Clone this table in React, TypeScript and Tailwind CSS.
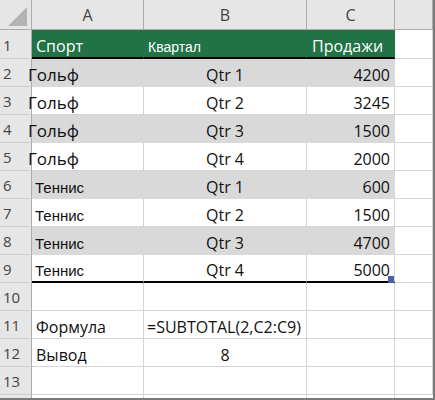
import React from 'react';

type Cell = {
  text: string;
  align?: 'left' | 'center' | 'right';
  font?: 'seg' | 'arial';
  size?: string;
  shift?: string;
};

type Row = {
  num: number;
  cells: (Cell | null)[];
  band?: boolean;
  header?: boolean;
  thick?: boolean;
};

const golf = (q: string, n: string, band: boolean, num: number): Row => ({
  num,
  band,
  cells: [
    { text: 'Гольф', shift: '-ml-[8px]', size: 'text-[17px]' },
    { text: q, align: 'center' },
    { text: n, align: 'right' },
    null,
  ],
});

const tennis = (q: string, n: string, band: boolean, num: number, thick = false): Row => ({
  num,
  band,
  thick,
  cells: [
    { text: 'Теннис', font: 'arial', size: 'text-[15px]', shift: '-ml-[1px]' },
    { text: q, align: 'center' },
    { text: n, align: 'right' },
    null,
  ],
});

const rows: Row[] = [
  {
    num: 1,
    header: true,
    cells: [
      { text: 'Спорт', size: 'text-[16px]' },
      { text: 'Квартал', font: 'arial', size: 'text-[14px]' },
      { text: 'Продажи', size: 'text-[16px]', shift: 'ml-[1px]' },
      null,
    ],
  },
  golf('Qtr 1', '4200', true, 2),
  golf('Qtr 2', '3245', false, 3),
  golf('Qtr 3', '1500', true, 4),
  golf('Qtr 4', '2000', false, 5),
  tennis('Qtr 1', '600', true, 6),
  tennis('Qtr 2', '1500', false, 7),
  tennis('Qtr 3', '4700', true, 8),
  tennis('Qtr 4', '5000', false, 9, true),
  { num: 10, cells: [null, null, null, null] },
  {
    num: 11,
    cells: [
      { text: 'Формула', size: 'text-[16px]' },
      { text: '=SUBTOTAL(2,C2:C9)', shift: '-ml-[1px]' },
      null,
      null,
    ],
  },
  {
    num: 12,
    cells: [{ text: 'Вывод', size: 'text-[16px]' }, { text: '8', align: 'center' }, null, null],
  },
  { num: 13, cells: [null, null, null, null] },
];

function DataCell({ cell, row, col }: { cell: Cell | null; row: Row; col: number }) {
  const inTable = col < 3;
  let bg = 'bg-white border-[#d4d4d4]';
  if (row.header && inTable) bg = 'bg-[#217346] border-[#217346] text-white';
  else if (row.band && inTable) bg = 'bg-[#d9d9d9] border-[#d9d9d9]';

  const bottom =
    (row.header || row.thick) && inTable ? 'border-b-2 border-b-black' : 'border-b';

  const align =
    cell?.align === 'center' ? 'justify-center' : cell?.align === 'right' ? 'justify-end pr-[4px]' : 'justify-start pl-[4px]';

  const font = cell?.font === 'arial' ? "font-['Liberation_Sans',sans-serif]" : "font-['Open_Sans',sans-serif]";

  return (
    <div className={`relative flex items-end border-r ${bottom} ${bg} ${align} pb-[3px]`}>
      {cell && (
        <span
          className={`${font} ${cell.size ?? 'text-[16px]'} ${cell.shift ?? ''} whitespace-nowrap leading-none ${
            row.header ? 'text-white' : 'text-[#111]'
          }`}
        >
          {cell.text}
        </span>
      )}
      {row.thick && col === 2 && (
        <span className="absolute right-0 bottom-[-2px] w-[6px] h-[7px] bg-[#4f5ca8]" />
      )}
    </div>
  );
}

export default function App() {
  return (
    <div className="w-[435px] h-[400px] bg-white overflow-hidden border-r-2 border-b-2 border-[#7a7a7a] font-['Open_Sans',sans-serif]">
      <div className="grid h-[398px] grid-cols-[32px_112px_163px_88px_38px] grid-rows-[30px_29px_repeat(12,28px)_1fr]">
        {/* column headers */}
        <div className="relative bg-[#e6e6e6] border-r border-b border-[#ababab]">
          <svg className="absolute left-[8px] top-[7px]" width="19" height="19" viewBox="0 0 19 19">
            <polygon points="0,19 19,19 19,0" fill="#b4b4b4" />
          </svg>
        </div>
        {['A', 'B', 'C', ''].map((l, i) => (
          <div
            key={i}
            className="flex items-center justify-center bg-[#e6e6e6] border-r border-b border-[#ababab] text-[16px] text-[#444] pt-[1px]"
          >
            {l}
          </div>
        ))}

        {rows.map((row) => (
          <React.Fragment key={row.num}>
            <div className="flex items-center pl-[3px] bg-[#e6e6e6] border-r border-r-[#ababab] border-b border-b-[#cfcfcf] text-[15px] text-[#444] pt-[2px]">
              {row.num}
            </div>
            {row.cells.map((c, col) => (
              <DataCell key={col} cell={c} row={row} col={col} />
            ))}
          </React.Fragment>
        ))}

        {/* partial row 14 */}
        <div className="bg-[#e6e6e6] border-r border-[#ababab]" />
        <div className="border-r border-[#d4d4d4]" />
        <div className="border-r border-[#d4d4d4]" />
        <div className="border-r border-[#d4d4d4]" />
        <div />
      </div>
    </div>
  );
}
